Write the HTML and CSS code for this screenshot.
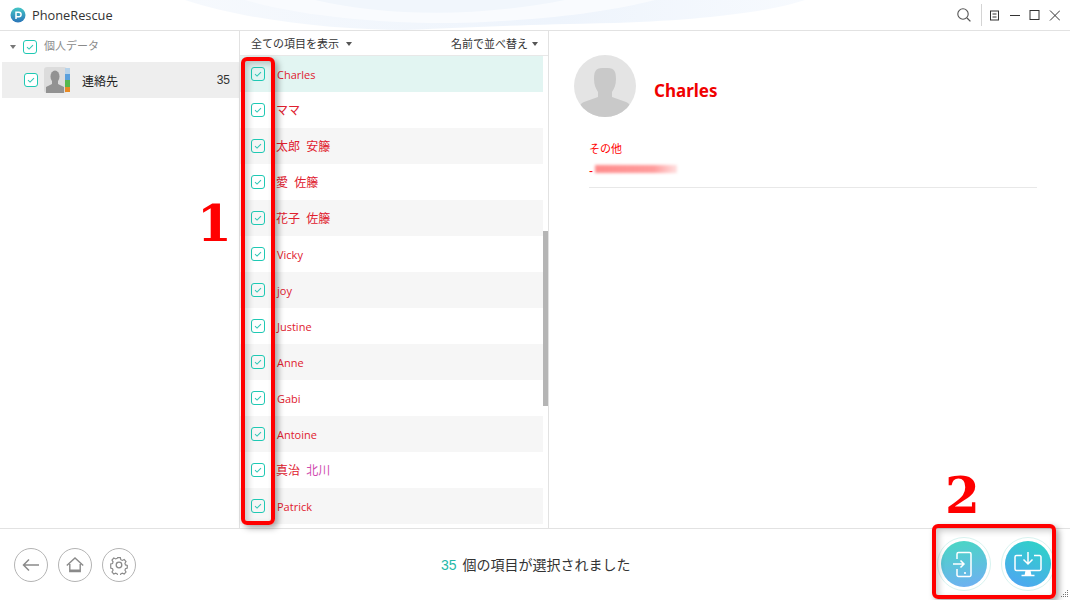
FILE: index.html
```html
<!DOCTYPE html>
<html lang="ja">
<head>
<meta charset="utf-8">
<title>PhoneRescue</title>
<link rel="stylesheet" href="styles.css">
</head>
<body>
<div class="app">
  <header class="titlebar">
    <svg class="swoosh" viewBox="0 0 620 30" width="620" height="30" aria-hidden="true">
      <defs><linearGradient id="sw" x1="0" y1="0" x2="1" y2="0"><stop offset="0" stop-color="#f6f9fd"/><stop offset=".6" stop-color="#eef4fc"/><stop offset="1" stop-color="#f7fafe"/></linearGradient></defs>
      <path d="M0 0H620C590 10 530 20 430 23C330 25 290 27 220 30C150 30 60 20 0 0Z" fill="url(#sw)"/>
      <path d="M60 0C120 18 220 26 300 22C380 18 430 10 470 0Z" fill="#f9fbfe"/>
      <path d="M130 0C200 16 290 18 380 0Z" fill="#f1f6fc"/>
    </svg>
    <div class="brand">
      <svg width="16" height="16" viewBox="0 0 16 16"><defs><linearGradient id="lg" x1="0" y1="0" x2="0" y2="1"><stop offset="0" stop-color="#45c6c6"/><stop offset="1" stop-color="#2a74b8"/></linearGradient></defs><circle cx="8" cy="8" r="7.5" fill="url(#lg)"/><path d="M6 12V5.200h2.800a2.200 2.200 0 0 1 0 4.600H6.600" fill="none" stroke="#fff" stroke-width="1.500"/></svg>
      <span>PhoneRescue</span>
    </div>
    <div class="winctl">
      <svg width="16" height="16" viewBox="0 0 16 16"><circle cx="7" cy="7" r="5.200" fill="none" stroke="#555" stroke-width="1.100"/><path d="M11 11l3.400 3.400" stroke="#555" stroke-width="1.300"/></svg>
      <span class="sep"></span>
      <svg width="10" height="11" viewBox="0 0 10 11"><rect x=".5" y="1" width="8" height="9" fill="none" stroke="#333"/><path d="M2.500 4h4M2.500 7h4" stroke="#333"/></svg>
      <svg width="11" height="11" viewBox="0 0 11 11"><path d="M1 5.500h10" stroke="#333"/></svg>
      <svg width="11" height="11" viewBox="0 0 11 11"><rect x="1" y=".5" width="9" height="9" fill="none" stroke="#333"/></svg>
      <svg width="11" height="11" viewBox="0 0 11 11"><path d="M1 .5l10 10M11 .5L1 10.500" stroke="#333"/></svg>
    </div>
  </header>

  <main class="body">
    <aside class="side">
      <div class="side-head">
        <span class="tri"></span>
        <span class="cb"><svg viewBox="0 0 14 14"><path d="M3.500 7.200l2.400 2.200 4.600-4.600"/></svg></span>
        <span class="side-title">個人データ</span>
      </div>
      <div class="side-item">
        <span class="cb"><svg viewBox="0 0 14 14"><path d="M3.500 7.200l2.400 2.200 4.600-4.600"/></svg></span>
        <svg class="book" width="26" height="26" viewBox="0 0 26 26">
          <rect x="0" y="0" width="23" height="26" rx="3" fill="#dcdcdc"/>
          <ellipse cx="11" cy="9.500" rx="4.500" ry="6" fill="#929292"/>
          <path d="M8 13h6v4l6 3v6H2v-6l6-3z" fill="#929292"/>
          <rect x="21" y="1" width="5" height="6" fill="#b7d3ea"/>
          <rect x="21" y="7" width="5" height="6" fill="#5aa0dc"/>
          <rect x="21" y="13" width="5" height="7" fill="#56b84e"/>
          <rect x="21" y="20" width="5" height="5" fill="#e98a24"/>
        </svg>
        <span class="side-name">連絡先</span>
        <span class="side-count">35</span>
      </div>
    </aside>

    <section class="list">
      <div class="list-head">
        <span class="filter">全ての項目を表示<i class="caret"></i></span>
        <span class="sort">名前で並べ替え<i class="caret"></i></span>
      </div>
      <div class="list-wrap">
        <ul class="rows">
          <li class="row sel"><span class="cb"><svg viewBox="0 0 14 14"><path d="M3.500 7.200l2.400 2.200 4.600-4.600"/></svg></span><span class="lat">Charles</span></li>
          <li class="row"><span class="cb"><svg viewBox="0 0 14 14"><path d="M3.500 7.200l2.400 2.200 4.600-4.600"/></svg></span><span class="cjk">ママ</span></li>
          <li class="row alt"><span class="cb"><svg viewBox="0 0 14 14"><path d="M3.500 7.200l2.400 2.200 4.600-4.600"/></svg></span><span class="cjk">太郎&nbsp;&nbsp;安籐</span></li>
          <li class="row"><span class="cb"><svg viewBox="0 0 14 14"><path d="M3.500 7.200l2.400 2.200 4.600-4.600"/></svg></span><span class="cjk">愛&nbsp;&nbsp;佐籐</span></li>
          <li class="row alt"><span class="cb"><svg viewBox="0 0 14 14"><path d="M3.500 7.200l2.400 2.200 4.600-4.600"/></svg></span><span class="cjk">花子&nbsp;&nbsp;佐籐</span></li>
          <li class="row"><span class="cb"><svg viewBox="0 0 14 14"><path d="M3.500 7.200l2.400 2.200 4.600-4.600"/></svg></span><span class="lat">Vicky</span></li>
          <li class="row alt"><span class="cb"><svg viewBox="0 0 14 14"><path d="M3.500 7.200l2.400 2.200 4.600-4.600"/></svg></span><span class="lat">joy</span></li>
          <li class="row"><span class="cb"><svg viewBox="0 0 14 14"><path d="M3.500 7.200l2.400 2.200 4.600-4.600"/></svg></span><span class="lat">Justine</span></li>
          <li class="row alt"><span class="cb"><svg viewBox="0 0 14 14"><path d="M3.500 7.200l2.400 2.200 4.600-4.600"/></svg></span><span class="lat">Anne</span></li>
          <li class="row"><span class="cb"><svg viewBox="0 0 14 14"><path d="M3.500 7.200l2.400 2.200 4.600-4.600"/></svg></span><span class="lat">Gabi</span></li>
          <li class="row alt"><span class="cb"><svg viewBox="0 0 14 14"><path d="M3.500 7.200l2.400 2.200 4.600-4.600"/></svg></span><span class="lat">Antoine</span></li>
          <li class="row"><span class="cb"><svg viewBox="0 0 14 14"><path d="M3.500 7.200l2.400 2.200 4.600-4.600"/></svg></span><span class="cjk">真治&nbsp;&nbsp;<em class="pink">北川</em></span></li>
          <li class="row alt"><span class="cb"><svg viewBox="0 0 14 14"><path d="M3.500 7.200l2.400 2.200 4.600-4.600"/></svg></span><span class="lat">Patrick</span></li>
        </ul>
        <div class="scroll"><span class="thumb"></span></div>
      </div>
    </section>

    <section class="detail">
      <div class="person">
        <svg class="avatar" width="62" height="62" viewBox="0 0 62 62">
          <defs><clipPath id="ac"><circle cx="31" cy="31" r="31"/></clipPath></defs>
          <circle cx="31" cy="31" r="31" fill="#e4e4e4"/>
          <g clip-path="url(#ac)" fill="#c9c9c9">
            <path d="M20 24c0-10 3-11 11-11s11 1 11 11c0 6-2 10-4 13v5l14 5c3 1 4 3 5 6v10H5V53c1-3 2-5 5-6l14-5v-5c-2-3-4-7-4-13z"/>
          </g>
        </svg>
        <h1 class="name">Charles</h1>
      </div>
      <div class="field">
        <div class="field-label">その他</div>
        <div class="field-value"><span class="dash">-</span><span class="blur"></span></div>
      </div>
    </section>
  </main>

  <footer class="footer">
    <div class="navs">
      <span class="nav"><svg width="20" height="20" viewBox="0 0 20 20"><path d="M18 10H2.500M8 4.500L2.500 10 8 15.500" fill="none" stroke="#8a8a8a" stroke-width="1.500"/></svg></span>
      <span class="nav"><svg width="20" height="20" viewBox="0 0 20 20"><path d="M1.800 10.500L10 3l8.200 7.500M4.800 9v7.500h10.400V9" fill="none" stroke="#8a8a8a" stroke-width="1.400"/><path d="M4.800 15.500h10.400" stroke="#8a8a8a" stroke-width="2"/></svg></span>
      <span class="nav"><svg width="20" height="20" viewBox="0 0 20 20"><circle cx="10" cy="10" r="2.800" fill="none" stroke="#8a8a8a" stroke-width="1.300"/><path d="M8.500 1.800h3l.5 2.300 1.700.8 2.100-1 2 2.200-1.200 2 .6 1.800 2 .6v2.900l-2 .6-.6 1.800 1.200 2-2 2.200-2.100-1-1.700.8-.5 2.300h-3l-.5-2.300-1.700-.8-2.100 1-2-2.200 1.200-2-.6-1.800-2-.6V8.900l2-.6.6-1.800-1.200-2 2-2.200 2.100 1 1.700-.8z" transform="translate(1 1) scale(.9)" fill="none" stroke="#8a8a8a" stroke-width="1.300"/></svg></span>
    </div>
    <div class="status"><b>35</b> 個の項目が選択されました</div>
    <div class="actions">
      <span class="act"><span class="disc d1"><svg width="28" height="28" viewBox="0 0 28 28"><g fill="none" stroke="#fff" stroke-width="1.500"><path d="M7 9V4a1.500 1.500 0 0 1 1.500-1.500h11A1.500 1.500 0 0 1 21 4v21a1.500 1.500 0 0 1-1.500 1.500h-11A1.500 1.500 0 0 1 7 25v-6"/><path d="M3 14h11M10.500 10.500L14 14l-3.500 3.500"/></g><circle cx="15" cy="23" r="1.100" fill="#fff"/></svg></span></span>
      <span class="act"><span class="disc d2"><svg width="30" height="28" viewBox="0 0 30 28"><g fill="none" stroke="#fff" stroke-width="1.500"><path d="M9 5.500H3.500A1.500 1.500 0 0 0 2 7v12a1.500 1.500 0 0 0 1.500 1.500h23A1.500 1.500 0 0 0 28 19V7a1.500 1.500 0 0 0-1.500-1.500H21"/><path d="M15 2v11M10.500 9.500L15 14l4.500-4.500"/><path d="M8.500 25.500h13"/></g><path d="M12.500 20.500h5l1 5h-7z" fill="#fff"/></svg></span></span>
    </div>
    <svg class="grip" width="9" height="9" viewBox="0 0 9 9"><g fill="#777"><rect x="7" y="1" width="1" height="1"/><rect x="5" y="3" width="1" height="1"/><rect x="7" y="3" width="1" height="1"/><rect x="3" y="5" width="1" height="1"/><rect x="5" y="5" width="1" height="1"/><rect x="7" y="5" width="1" height="1"/><rect x="1" y="7" width="1" height="1"/><rect x="3" y="7" width="1" height="1"/><rect x="5" y="7" width="1" height="1"/><rect x="7" y="7" width="1" height="1"/></g></svg>
  </footer>

  <div class="mark box1"></div>
  <div class="mark box2"></div>
  <div class="num n1">1</div>
  <div class="num n2">2</div>
</div>
</body>
</html>
```

FILE: styles.css
```css
* { box-sizing: border-box; }
html, body { margin: 0; padding: 0; }
body { font-family: "Liberation Sans", "Noto Sans CJK JP", sans-serif; background: #fff; }
.app { position: relative; width: 1070px; height: 600px; overflow: hidden; display: flex; flex-direction: column; background: #fff; }

.titlebar { position: relative; height: 31px; flex: none; display: flex; align-items: center; justify-content: space-between; border-bottom: 1px solid #e2e2e2; padding: 0 10px; }
.swoosh { position: absolute; left: 185px; top: 0; }
.brand { position: relative; display: flex; align-items: center; gap: 6px; font-family: "Open Sans", sans-serif; font-size: 12.800px; color: #333; }
.brand svg { width: 16px; height: 16px; }
.winctl { position: relative; display: flex; align-items: center; gap: 9px; }
.sep { width: 1px; height: 22px; background: #d4d4d4; margin-right: -1px; }

.body { flex: 1; display: flex; min-height: 0; }
.side { width: 240px; flex: none; border-right: 1px solid #e2e2e2; }
.side-head { height: 31px; display: flex; align-items: center; padding-left: 10px; }
.tri { width: 0; height: 0; border-left: 3.500px solid transparent; border-right: 3.500px solid transparent; border-top: 4px solid #777; margin-right: 7px; }
.cb { width: 14px; height: 14px; border: 1.300px solid #1fc9b4; border-radius: 3px; display: inline-flex; align-items: center; justify-content: center; flex: none; background: #fff; }
.cb svg { width: 12px; height: 12px; flex: none; fill: none; stroke: #2fc7b6; stroke-width: 1.200; }
.side-title { font-size: 11px; line-height: 13px; color: #8a8a8a; margin-left: 7px; }
.side-item { margin-left: 2px; height: 36px; background: #eeeeee; display: flex; align-items: center; padding-left: 22px; color: #333; font-size: 12px; }
.book { margin-left: 6px; }
.side-name { margin-left: 12px; font-size: 12px; color: #222; }
.side-count { margin-left: auto; margin-right: 9px; font-size: 12px; }

.list { width: 309px; flex: none; border-right: 1px solid #e2e2e2; display: flex; flex-direction: column; }
.list-head { height: 25px; flex: none; display: flex; justify-content: space-between; align-items: center; padding: 0 10px 0 11px; font-size: 11px; color: #333; border-bottom: 1px solid #e8e8e8; }
.caret { display: inline-block; width: 0; height: 0; border-left: 3.500px solid transparent; border-right: 3.500px solid transparent; border-top: 4px solid #555; vertical-align: 2px; }
.sort .caret { margin-left: 4px; }
.filter .caret { margin-left: 7px; }
.list-wrap { flex: 1; display: flex; min-height: 0; }
.rows { list-style: none; margin: 0; padding: 0; width: 303px; flex: none; }
.row { height: 36px; display: flex; align-items: center; padding-left: 11px; gap: 11px; color: #e0202e; }
.row .cb { background: transparent; }
.lat { font-family: "Open Sans", sans-serif; font-size: 11px; margin-left: 1px; }
.cjk { font-family: "Open Sans", "Noto Sans CJK JP", sans-serif; font-size: 12px; }
.row.alt { background: #f6f6f6; }
.row.sel { background: #e2f5f2; }
.pink { font-style: normal; color: #d04cb0; }
.scroll { width: 5px; flex: none; position: relative; }
.thumb { position: absolute; left: 0; top: 175px; width: 5px; height: 175px; background: #b5b5b5; }

.detail { flex: 1; padding: 24px 33px 0 25px; }
.person { display: flex; align-items: center; gap: 18px; }
.name { margin: 8px 0 0; font-size: 17px; font-weight: 700; color: #f00000; font-family: "Noto Sans", sans-serif; }
.field { margin: 22px 0 0 15px; padding-bottom: 8px; border-bottom: 1px solid #e8e8e8; color: #f00; font-size: 11px; line-height: 20px; }
.field-value { display: flex; align-items: center; height: 20px; }
.dash { width: 6px; font-size: 12px; position: relative; top: 2px; }
.blur { display: block; width: 82px; height: 8px; margin-top: -1px; background: linear-gradient(90deg, #ff8c8c, #ff9c9c 72%, #ffe0e0); filter: blur(1.500px); }

.footer { position: relative; height: 72px; flex: none; border-top: 1px solid #e2e2e2; display: flex; align-items: center; padding: 0 15px 0 14px; }
.navs { display: flex; gap: 10px; }
.nav { width: 34px; height: 34px; border: 1px solid #b4b4b4; border-radius: 50%; display: flex; align-items: center; justify-content: center; }
.status { position: absolute; left: 441px; top: 25px; font-size: 14px; color: #333; }
.status b { font-weight: 400; color: #25b9a8; margin-right: 2px; }
.actions { margin-left: auto; display: flex; gap: 10px; margin-top: -2px; }
.act { width: 54px; height: 54px; border-radius: 50%; border: 1px solid #d8f3f0; display: flex; align-items: center; justify-content: center; }
.disc { width: 46px; height: 46px; border-radius: 50%; display: flex; align-items: center; justify-content: center; }
.d1 { background: linear-gradient(170deg, #48d8c2, #70aef4); }
.d2 { background: linear-gradient(205deg, #2cd6c4, #52a2f6); }
.grip { position: absolute; right: 1px; bottom: 2px; }

.mark { position: absolute; border: 4px solid #f00; border-radius: 6px; box-shadow: 3px 3px 6px rgba(0,0,0,.35), inset 3px 3px 6px rgba(0,0,0,.2); }
.box1 { left: 241px; top: 57px; width: 34px; height: 468px; }
.box2 { left: 932px; top: 524px; width: 124px; height: 75px; }
.num { position: absolute; color: #f00; font-family: "DejaVu Serif", serif; font-weight: 700; font-size: 50px; line-height: 1; }
.n1 { left: 197px; top: 199px; }
.n2 { left: 945px; top: 471px; }
```
